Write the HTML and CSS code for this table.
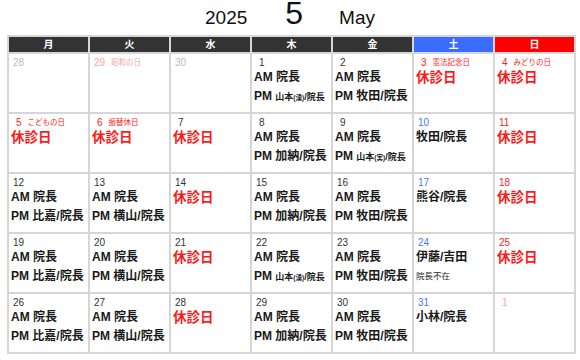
FILE: index.html
```html
<!DOCTYPE html>
<html lang="ja">
<head>
<meta charset="utf-8">
<link rel="stylesheet" href="styles.css">
</head>
<body>
<div class="title">
  <span class="year">2025</span>
  <span class="month">5</span>
  <span class="en">May</span>
</div>
<div class="cal">
  <div class="hd">月</div>
  <div class="hd">火</div>
  <div class="hd">水</div>
  <div class="hd">木</div>
  <div class="hd">金</div>
  <div class="hd sat">土</div>
  <div class="hd sun">日</div>

  <!-- row 1 -->
  <div class="cell"><div class="num out">28</div></div>
  <div class="cell"><div class="num outh">29<span class="hol">昭和の日</span></div></div>
  <div class="cell"><div class="num out">30</div></div>
  <div class="cell"><div class="num sd">1</div><div class="ln">AM 院長</div><div class="ln">PM <span class="sm">山本<span class="xs">(湧)</span>/院長</span></div></div>
  <div class="cell"><div class="num sd">2</div><div class="ln">AM 院長</div><div class="ln">PM 牧田/院長</div></div>
  <div class="cell"><div class="num sd red">3<span class="hol">憲法記念日</span></div><div class="off">休診日</div></div>
  <div class="cell"><div class="num sd red">4<span class="hol">みどりの日</span></div><div class="off">休診日</div></div>

  <!-- row 2 -->
  <div class="cell"><div class="num sd red">5<span class="hol">こどもの日</span></div><div class="off">休診日</div></div>
  <div class="cell"><div class="num sd red">6<span class="hol">振替休日</span></div><div class="off">休診日</div></div>
  <div class="cell"><div class="num sd">7</div><div class="off">休診日</div></div>
  <div class="cell"><div class="num sd">8</div><div class="ln">AM 院長</div><div class="ln">PM 加納/院長</div></div>
  <div class="cell"><div class="num sd">9</div><div class="ln">AM 院長</div><div class="ln">PM <span class="sm">山本<span class="xs">(実)</span>/院長</span></div></div>
  <div class="cell"><div class="num blue">10</div><div class="ln">牧田/院長</div></div>
  <div class="cell"><div class="num red">11</div><div class="off">休診日</div></div>

  <!-- row 3 -->
  <div class="cell"><div class="num">12</div><div class="ln">AM 院長</div><div class="ln">PM 比嘉/院長</div></div>
  <div class="cell"><div class="num">13</div><div class="ln">AM 院長</div><div class="ln">PM 横山/院長</div></div>
  <div class="cell"><div class="num">14</div><div class="off">休診日</div></div>
  <div class="cell"><div class="num">15</div><div class="ln">AM 院長</div><div class="ln">PM 加納/院長</div></div>
  <div class="cell"><div class="num">16</div><div class="ln">AM 院長</div><div class="ln">PM 牧田/院長</div></div>
  <div class="cell"><div class="num blue">17</div><div class="ln">熊谷/院長</div></div>
  <div class="cell"><div class="num red">18</div><div class="off">休診日</div></div>

  <!-- row 4 -->
  <div class="cell"><div class="num">19</div><div class="ln">AM 院長</div><div class="ln">PM 比嘉/院長</div></div>
  <div class="cell"><div class="num">20</div><div class="ln">AM 院長</div><div class="ln">PM 横山/院長</div></div>
  <div class="cell"><div class="num">21</div><div class="off">休診日</div></div>
  <div class="cell"><div class="num">22</div><div class="ln">AM 院長</div><div class="ln">PM <span class="sm">山本<span class="xs">(湧)</span>/院長</span></div></div>
  <div class="cell"><div class="num">23</div><div class="ln">AM 院長</div><div class="ln">PM 牧田/院長</div></div>
  <div class="cell"><div class="num blue">24</div><div class="ln">伊藤/吉田</div><div class="ln note">院長不在</div></div>
  <div class="cell"><div class="num red">25</div><div class="off">休診日</div></div>

  <!-- row 5 -->
  <div class="cell"><div class="num">26</div><div class="ln">AM 院長</div><div class="ln">PM 比嘉/院長</div></div>
  <div class="cell"><div class="num">27</div><div class="ln">AM 院長</div><div class="ln">PM 横山/院長</div></div>
  <div class="cell"><div class="num">28</div><div class="off">休診日</div></div>
  <div class="cell"><div class="num">29</div><div class="ln">AM 院長</div><div class="ln">PM 加納/院長</div></div>
  <div class="cell"><div class="num">30</div><div class="ln">AM 院長</div><div class="ln">PM 牧田/院長</div></div>
  <div class="cell"><div class="num blue">31</div><div class="ln">小林/院長</div></div>
  <div class="cell"><div class="num sd outh">1</div></div>
</div>
</body>
</html>
```
FILE: styles.css
```css
html, body {
  margin: 0;
  padding: 0;
  background: #fff;
}
body {
  font-family: "Liberation Sans", "Noto Sans CJK JP", sans-serif;
  color: #222;
}
.title {
  height: 35px;
  display: flex;
  justify-content: center;
  align-items: baseline;
  line-height: 26px;
  color: #111;
}
.year, .en {
  font-size: 19px;
}
.month {
  font-size: 32px;
  margin: 0 36px 0 38px;
}
.cal {
  display: grid;
  grid-template-columns: repeat(7, 79px);
  grid-template-rows: 15px repeat(5, 58px);
  gap: 2px;
  padding: 2px;
  margin-left: 7px;
  width: max-content;
  background: #d6d6d6;
}
.hd {
  background: #333;
  color: #fff;
  font-size: 10px;
  font-weight: bold;
  line-height: 15px;
  text-align: center;
}
.hd.sat { background: #3a6cff; }
.hd.sun { background: #ff0000; }
.cell {
  background: #fff;
  padding: 0 2px;
  overflow: hidden;
}
.num {
  font-size: 10px;
  line-height: 10px;
  padding: 4px 0 0 2px;
  height: 10px;
  color: #333;
  white-space: nowrap;
}
.num.sd { padding-left: 5px; }
.num.out { color: #bbb; }
.num.outh { color: #f9a3a3; }
.num.red { color: #f22; }
.num.blue { color: #4d76ff; }
.hol {
  font-size: 7.5px;
  margin-left: 6px;
  vertical-align: 1px;
}
.ln {
  font-size: 12px;
  font-weight: bold;
  line-height: 19px;
  color: #1a1a1a;
  white-space: nowrap;
}
.sm {
  font-size: 9px;
}
.xs {
  font-size: 6.5px;
}
.note {
  font-size: 8.5px;
  font-weight: normal;
}
.off {
  font-size: 13.5px;
  font-weight: bold;
  line-height: 20px;
  color: #ff1a1a;
}
```
